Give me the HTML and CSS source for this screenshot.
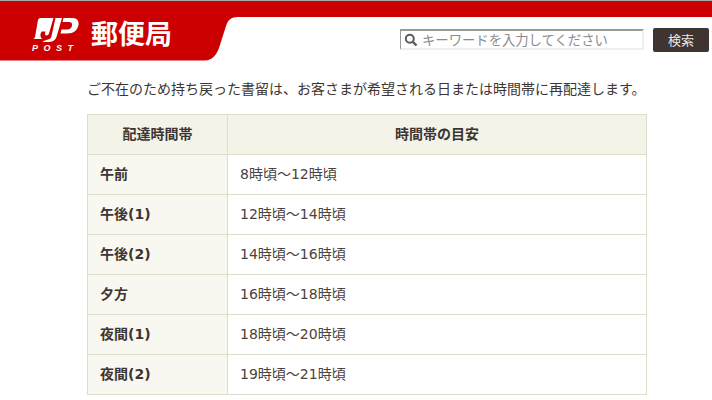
FILE: index.html
```html
<!DOCTYPE html>
<html lang="ja">
<head>
<meta charset="utf-8">
<title>郵便局</title>
<link rel="stylesheet" href="styles.css">
</head>
<body>
<header class="header">
  <svg class="header-bg" width="712" height="61" viewBox="0 0 712 61" aria-hidden="true">
    <rect width="712" height="1" fill="#a9a9a9"/>
    <path d="M0 1H712V17H238C231 17 228 20 226 26L219 48C216 56 212 60 205 60.500H0Z" fill="#cc0000"/>
  </svg>
  <div class="brand">
    <div class="logo">
      <svg class="logo-mark" width="46" height="25" viewBox="0 0 46 25" aria-hidden="true">
        <path d="M7.500 0H20.500L16 15.500Q15.500 17.500 13.500 17.500Q11.500 17.500 12 15.500L12.500 13.500H8.500L7.500 16C7 19 8.500 21 10 21H0Q1.500 21 2 19L5 2Q5.500 0 7.500 0Z" fill="#fff"/>
        <path d="M22.500 0H29L23.500 19C22 23 19 24 15 24H9.500C11 22.500 13 22 15 21.500C17.500 21 18 20 18.500 18Z" fill="#fff"/>
        <path d="M30.500 0H39.500C44.500 0 46 3 45.500 7C44.500 12 40.500 15.500 34.500 15.500H27.500L28.500 11.500H34C37 11.500 38.500 10 39 7.500C39.500 5 38 4 36 4H29.500Z" fill="#fff"/>
      </svg>
      <span class="logo-post">POST</span>
    </div>
    <span class="brand-name">郵便局</span>
  </div>
  <form class="search">
    <div class="search-box">
      <svg class="search-icon" width="14" height="14" viewBox="0 0 14 14" aria-hidden="true">
        <circle cx="5.800" cy="5.800" r="4" fill="none" stroke="#5c5c5c" stroke-width="2"/>
        <path d="M8.800 8.800L12.500 12.500" stroke="#5c5c5c" stroke-width="2.400"/>
      </svg>
      <span class="search-placeholder">キーワードを入力してください</span>
    </div>
    <button class="search-btn" type="button">検索</button>
  </form>
</header>
<main class="content">
  <p class="lead">ご不在のため持ち戻った書留は、お客さまが希望される日または時間帯に再配達します。</p>
  <table class="times">
    <thead>
      <tr><th class="col-slot"><span class="cell-text">配達時間帯</span></th><th><span class="cell-text">時間帯の目安</span></th></tr>
    </thead>
    <tbody>
      <tr><th class="row-head"><span class="cell-text">午前</span></th><td><span class="cell-text">8時頃～12時頃</span></td></tr>
      <tr><th class="row-head"><span class="cell-text">午後(1)</span></th><td><span class="cell-text">12時頃～14時頃</span></td></tr>
      <tr><th class="row-head"><span class="cell-text">午後(2)</span></th><td><span class="cell-text">14時頃～16時頃</span></td></tr>
      <tr><th class="row-head"><span class="cell-text">夕方</span></th><td><span class="cell-text">16時頃～18時頃</span></td></tr>
      <tr><th class="row-head"><span class="cell-text">夜間(1)</span></th><td><span class="cell-text">18時頃～20時頃</span></td></tr>
      <tr><th class="row-head"><span class="cell-text">夜間(2)</span></th><td><span class="cell-text">19時頃～21時頃</span></td></tr>
    </tbody>
  </table>
</main>
</body>
</html>
```
FILE: styles.css
```css
* { box-sizing: border-box; }
html, body { margin: 0; height: 400px; overflow: hidden; background: #fff; }
body {
  font-family: "DejaVu Sans", "Noto Sans CJK JP", sans-serif;
  font-size: 14px;
  color: #3d3532;
}
.header {
  position: relative;
  height: 61px;
  display: flex;
  justify-content: space-between;
  padding: 18px 3px 0 33px;
}
.header-bg { position: absolute; left: 0; top: 0; }
.brand { position: relative; display: flex; gap: 13px; align-items: flex-start; color: #fff; }
.logo { display: flex; flex-direction: column; width: 45px; }
.logo-mark { display: block; }
.logo-post {
  font: italic 700 9px/10px "Liberation Sans", sans-serif;
  letter-spacing: 5.5px;
  margin: 0 0 0 -1px;
}
.brand-name {
  font: 700 27px/36px "Noto Sans CJK JP", sans-serif;
  margin-top: -3px;
}
.search { position: relative; display: flex; gap: 9px; align-items: flex-start; margin-top: 10px; }
.search-box {
  width: 244px;
  height: 21px;
  margin-top: 1px;
  display: flex;
  align-items: center;
  gap: 4px;
  padding-left: 3px;
  border: 2px solid #efefef;
  border-top-color: #999;
  border-left-color: #999;
  border-left-width: 1px;
}
.search-icon { flex: none; }
.search-placeholder {
  font: 13.333px/17px "Noto Sans CJK JP", sans-serif;
  color: #8c8c8c;
  white-space: nowrap;
}
.search-btn {
  width: 56px;
  height: 24px;
  padding: 0;
  border: 0;
  border-radius: 2px;
  background: #3f3431;
  color: #e8e6e4;
  font: 13px/24px "Noto Sans CJK JP", sans-serif;
}
.content { padding: 0 0 0 87px; }
.lead {
  margin: 17px 0 15px;
  font: 14px/21px "Noto Sans CJK JP", sans-serif;
  white-space: nowrap;
}
.times {
  width: 560px;
  border-collapse: collapse;
  table-layout: fixed;
}
.times th, .times td {
  height: 40px;
  padding: 0 12px;
  border: 1px solid #ddddc9;
  font-size: 14px;
  line-height: 18px;
}
.cell-text { display: block; margin-top: -2px; }
.times thead th { background: #f3f3e8; text-align: center; font-weight: 700; }
.col-slot { width: 140px; }
.times .row-head { background: #f8f7f0; text-align: left; font-weight: 700; }
.times td { color: #4a4340; }
```
